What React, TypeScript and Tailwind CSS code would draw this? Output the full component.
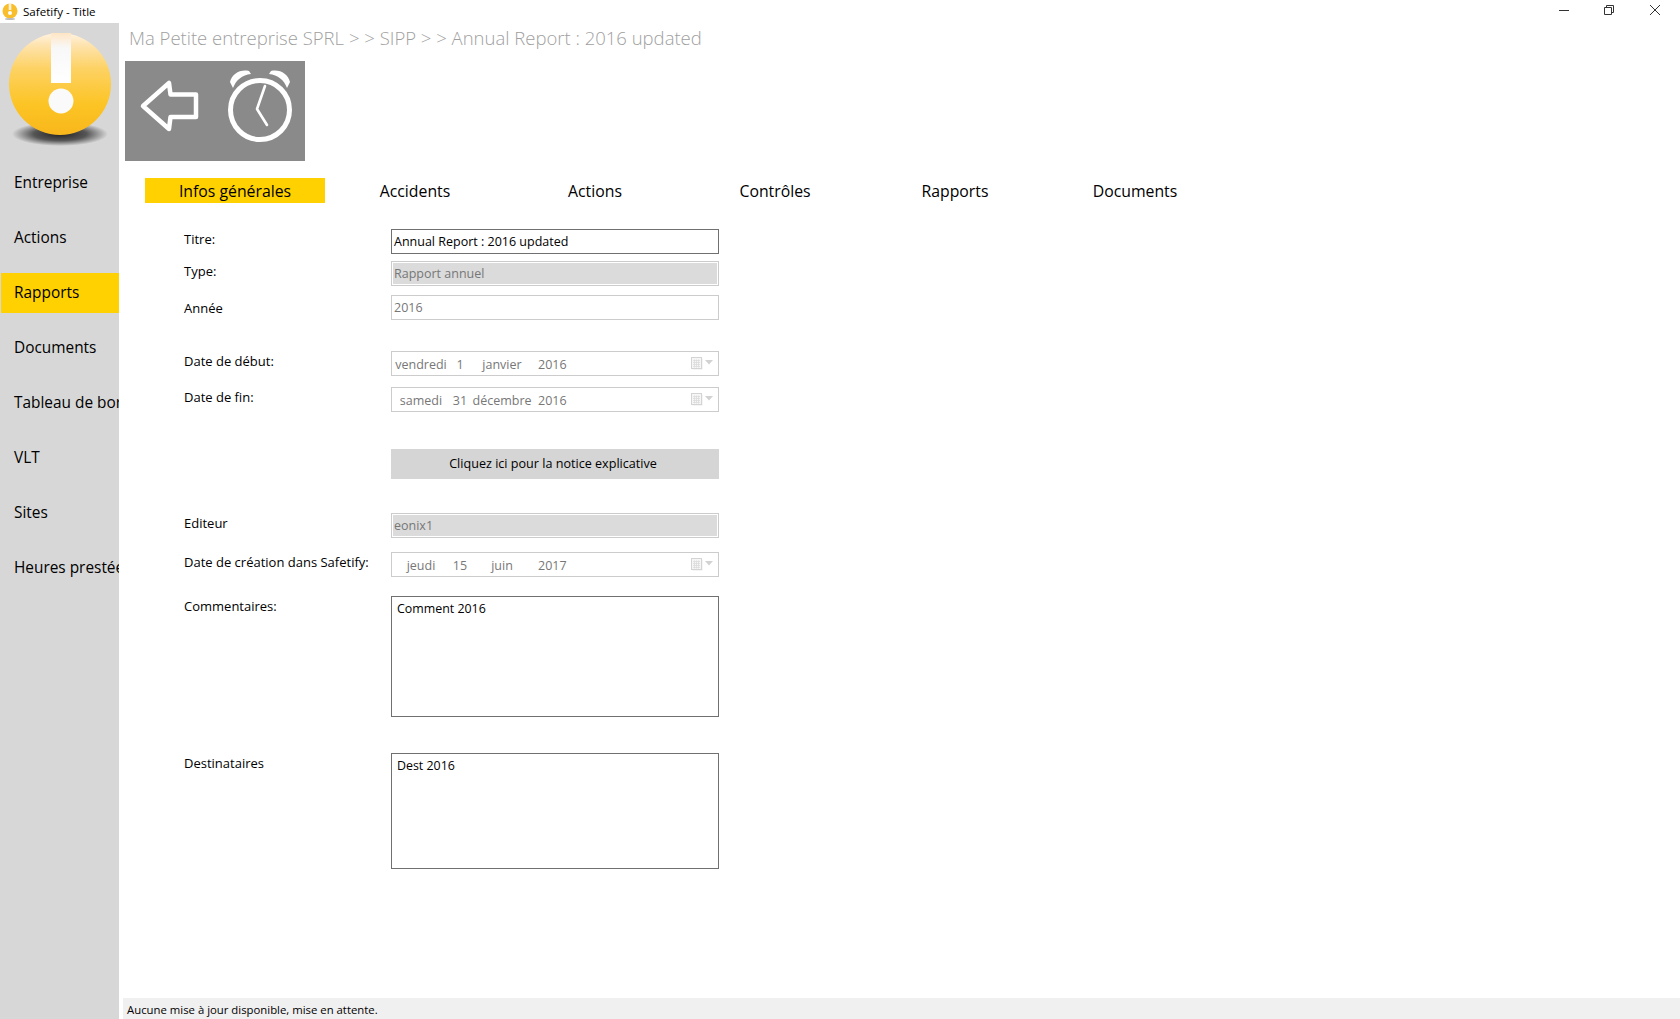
import React from "react";

const NAV = ["Entreprise", "Actions", "Rapports", "Documents", "Tableau de bord", "VLT", "Sites", "Heures prestées"];
const TABS = ["Infos générales", "Accidents", "Actions", "Contrôles", "Rapports", "Documents"];

function Logo() {
  return (
    <svg width="119" height="140" viewBox="0 0 119 140" className="block">
      <defs>
        <linearGradient id="ball" x1="0" y1="0" x2="0" y2="1">
          <stop offset="0" stopColor="#fff3e2" />
          <stop offset="0.12" stopColor="#fee3ad" />
          <stop offset="0.35" stopColor="#fdd263" />
          <stop offset="0.7" stopColor="#fcc424" />
          <stop offset="1" stopColor="#f8b71c" />
        </linearGradient>
        <linearGradient id="bar" x1="0" y1="0" x2="0" y2="1">
          <stop offset="0" stopColor="#ffe6c4" />
          <stop offset="0.3" stopColor="#f8f8f8" />
          <stop offset="1" stopColor="#ffffff" />
        </linearGradient>
        <radialGradient id="shadow">
          <stop offset="0" stopColor="#222" />
          <stop offset="0.55" stopColor="#555" />
          <stop offset="1" stopColor="#d7d7d7" />
        </radialGradient>
      </defs>
      <ellipse cx="60" cy="111" rx="48" ry="12" fill="url(#shadow)" />
      <circle cx="60" cy="61" r="51" fill="url(#ball)" />
      <rect x="51" y="10" width="20" height="50" fill="url(#bar)" />
      <circle cx="61" cy="78" r="12.5" fill="#fafafa" />
    </svg>
  );
}

function BackIcon() {
  return (
    <svg width="60" height="54" viewBox="0 0 60 54" className="block">
      <path d="M4 27 L30 4 L31.5 15.5 L57 15.5 L57 38 L31.5 38 L30 50 Z" fill="none" stroke="#fff" strokeWidth="4.5" strokeLinejoin="round" />
    </svg>
  );
}

function ClockIcon() {
  return (
    <svg width="66" height="76" viewBox="0 0 66 76" className="block">
      <circle cx="33" cy="43" r="29.5" fill="none" stroke="#fff" strokeWidth="5" />
      <path d="M38 19 L30 42 L40 58" fill="none" stroke="#fff" strokeWidth="2.6" strokeLinecap="round" strokeLinejoin="round" />
      <path d="M3 15 C5 7 13 2 22 4 L24 7 C15 8 9 13 6 21 Z" fill="#fff" />
      <path d="M63 15 C61 7 53 2 44 4 L42 7 C51 8 57 13 60 21 Z" fill="#fff" />
    </svg>
  );
}

function CalendarIcon() {
  return (
    <div className="flex items-center gap-[2px]">
      <svg width="12" height="13" viewBox="0 0 12 13" className="block">
        <rect x="1.5" y="1.5" width="10" height="11" fill="#ececec" />
        <rect x="0.5" y="0.5" width="10" height="11" fill="#f6f6f6" stroke="#d4d4d4" />
        <path d="M2 3.5H9M2 5.5H9M2 7.5H9M2 9.5H9M3.5 2.5V10.5M5.5 2.5V10.5M7.5 2.5V10.5" stroke="#dcdcdc" strokeWidth="0.8" fill="none" />
      </svg>
      <svg width="8" height="5" viewBox="0 0 8 5" className="-mt-[2px] block">
        <path d="M0 0H8L4 4.5Z" fill="#d2d2d2" />
      </svg>
    </div>
  );
}

function Label({ children, className }: { children: React.ReactNode; className: string }) {
  return <div className={`w-[207px] shrink-0 text-[13px] leading-[18px] text-black ${className}`}>{children}</div>;
}

function DateField({ parts }: { parts: string[] }) {
  return (
    <div className="flex h-[25px] w-[328px] items-center border border-[#cccccc] bg-white pl-[3px] pr-[5px] pt-[4px] text-[12.5px] text-[#777777]">
      <span className="w-[52px] whitespace-nowrap text-center">{parts[0]}</span>
      <span className="ml-[3px] w-[20px] text-center">{parts[1]}</span>
      <span className="ml-[2px] w-[60px] text-center">{parts[2]}</span>
      <span className="ml-[6px]">{parts[3]}</span>
      <div className="ml-auto -mt-[5px]"><CalendarIcon /></div>
    </div>
  );
}

export default function App() {
  return (
    <div className="flex h-[1019px] w-[1680px] flex-col overflow-hidden bg-white font-['Open_Sans','Noto_Sans',sans-serif] text-black">
      <div className="flex h-[23px] shrink-0 items-center pl-[2px]">
        <svg width="16" height="17" viewBox="0 0 16 17" className="block">
          <circle cx="8" cy="8" r="7.5" fill="#f9be2b" />
          <rect x="6.7" y="0" width="2.6" height="7" fill="#fff3dc" />
          <circle cx="8" cy="10" r="2" fill="#fff" />
          <ellipse cx="8" cy="16" rx="5" ry="1" fill="#bbb" />
        </svg>
        <span className="ml-[5px] text-[11.6px]">Safetify - Title</span>
        <div className="ml-auto -mt-[3px] flex items-center">
          <svg width="10" height="10" viewBox="0 0 10 10" className="mr-[35px] block">
            <path d="M0 5.5H10" stroke="#333" strokeWidth="1" />
          </svg>
          <svg width="10" height="10" viewBox="0 0 10 10" className="mr-[36px] block">
            <path d="M0.5 2.5H7.5V9.5H0.5Z M2.5 2.5V0.5H9.5V7.5H7.5" fill="none" stroke="#333" strokeWidth="1" />
          </svg>
          <svg width="10" height="10" viewBox="0 0 10 10" className="mr-[20px] block">
            <path d="M0 0L10 10M10 0L0 10" stroke="#333" strokeWidth="1" />
          </svg>
        </div>
      </div>

      <div className="flex min-h-0 flex-1">
        <aside className="flex w-[119px] shrink-0 flex-col overflow-hidden bg-[#d7d7d7]">
          <Logo />
          <nav className="flex flex-col gap-[15px] pl-[1px]">
            {NAV.map((n) => (
              <div
                key={n}
                className={`flex h-[40px] items-center whitespace-nowrap pl-[13px] text-[15.4px] ${n === "Rapports" ? "bg-[#ffd100]" : ""}`}
              >
                {n}
              </div>
            ))}
          </nav>
        </aside>

        <main className="flex min-w-0 flex-1 flex-col">
          <div className="flex-1">
            <div className="mt-[3px] h-[35px] whitespace-pre pl-[10px] text-[18.5px] font-light leading-[24px] text-[#9f9f9f]">
              Ma Petite entreprise SPRL &gt; &gt; SIPP &gt; &gt; Annual Report : 2016 updated
            </div>
            <div className="ml-[6px] flex h-[100px] w-[180px] items-center bg-[#8a8a8a] pb-[2px]">
              <div className="ml-[14px] -mt-[8px]"><BackIcon /></div>
              <div className="ml-[28px] -mt-[10px]"><ClockIcon /></div>
            </div>
            <div className="ml-[26px] mt-[17px] flex h-[25px]">
              {TABS.map((t, i) => (
                <div key={t} className={`flex w-[180px] items-center justify-center pt-[2px] text-[15.8px] ${i === 0 ? "bg-[#ffd100]" : ""}`}>
                  {t}
                </div>
              ))}
            </div>

            <div className="ml-[65px] mt-[26px] flex flex-col">
              <div className="flex">
                <Label className="pt-[1px]">Titre:</Label>
                <div className="flex h-[25px] w-[328px] items-center border border-[#707070] pl-[2px] pt-[2px] text-[12.5px]">Annual Report : 2016 updated</div>
              </div>
              <div className="mt-[7px] flex">
                <Label className="pt-[1px]">Type:</Label>
                <div className="h-[25px] w-[328px] border border-[#cccccc] p-[1px]">
                  <div className="flex h-full items-center bg-[#dbdbdb] pl-[1px] pt-[2px] text-[12.5px] text-[#777777]">Rapport annuel</div>
                </div>
              </div>
              <div className="mt-[9px] flex">
                <Label className="pt-[4px]">Année</Label>
                <div className="flex h-[25px] w-[328px] items-center border border-[#cccccc] pl-[2px] pt-[2px] text-[12.5px] text-[#777777]">2016</div>
              </div>
              <div className="mt-[31px] flex">
                <Label className="pt-[1px]">Date de début:</Label>
                <DateField parts={["vendredi", "1", "janvier", "2016"]} />
              </div>
              <div className="mt-[11px] flex">
                <Label className="pt-[1px]">Date de fin:</Label>
                <DateField parts={["samedi", "31", "décembre", "2016"]} />
              </div>
              <div className="mt-[37px] flex">
                <Label className="">{""}</Label>
                <div className="flex h-[30px] w-[328px] items-center justify-center bg-[#d5d5d5] pr-[4px] text-[12.6px]">Cliquez ici pour la notice explicative</div>
              </div>
              <div className="mt-[34px] flex">
                <Label className="pt-[1px]">Editeur</Label>
                <div className="h-[25px] w-[328px] border border-[#cccccc] p-[1px]">
                  <div className="flex h-full items-center bg-[#dbdbdb] pl-[1px] pt-[2px] text-[12.5px] text-[#777777]">eonix1</div>
                </div>
              </div>
              <div className="mt-[14px] flex">
                <Label className="pt-[1px]">Date de création dans Safetify:</Label>
                <DateField parts={["jeudi", "15", "juin", "2017"]} />
              </div>
              <div className="mt-[19px] flex">
                <Label className="pt-[1px]">Commentaires:</Label>
                <div className="h-[121px] w-[328px] border border-[#707070] pl-[5px] pt-[3px] text-[12.4px] leading-[18px]">Comment 2016</div>
              </div>
              <div className="mt-[36px] flex">
                <Label className="pt-[1px]">Destinataires</Label>
                <div className="h-[116px] w-[328px] border border-[#707070] pl-[5px] pt-[3px] text-[12.4px] leading-[18px]">Dest 2016</div>
              </div>
            </div>
          </div>
          <div className="ml-[4px] flex h-[21px] shrink-0 items-center bg-[#f0f0f0] pl-[4px] pt-[3px] text-[11.35px]">
            Aucune mise à jour disponible, mise en attente.
          </div>
        </main>
      </div>
    </div>
  );
}
